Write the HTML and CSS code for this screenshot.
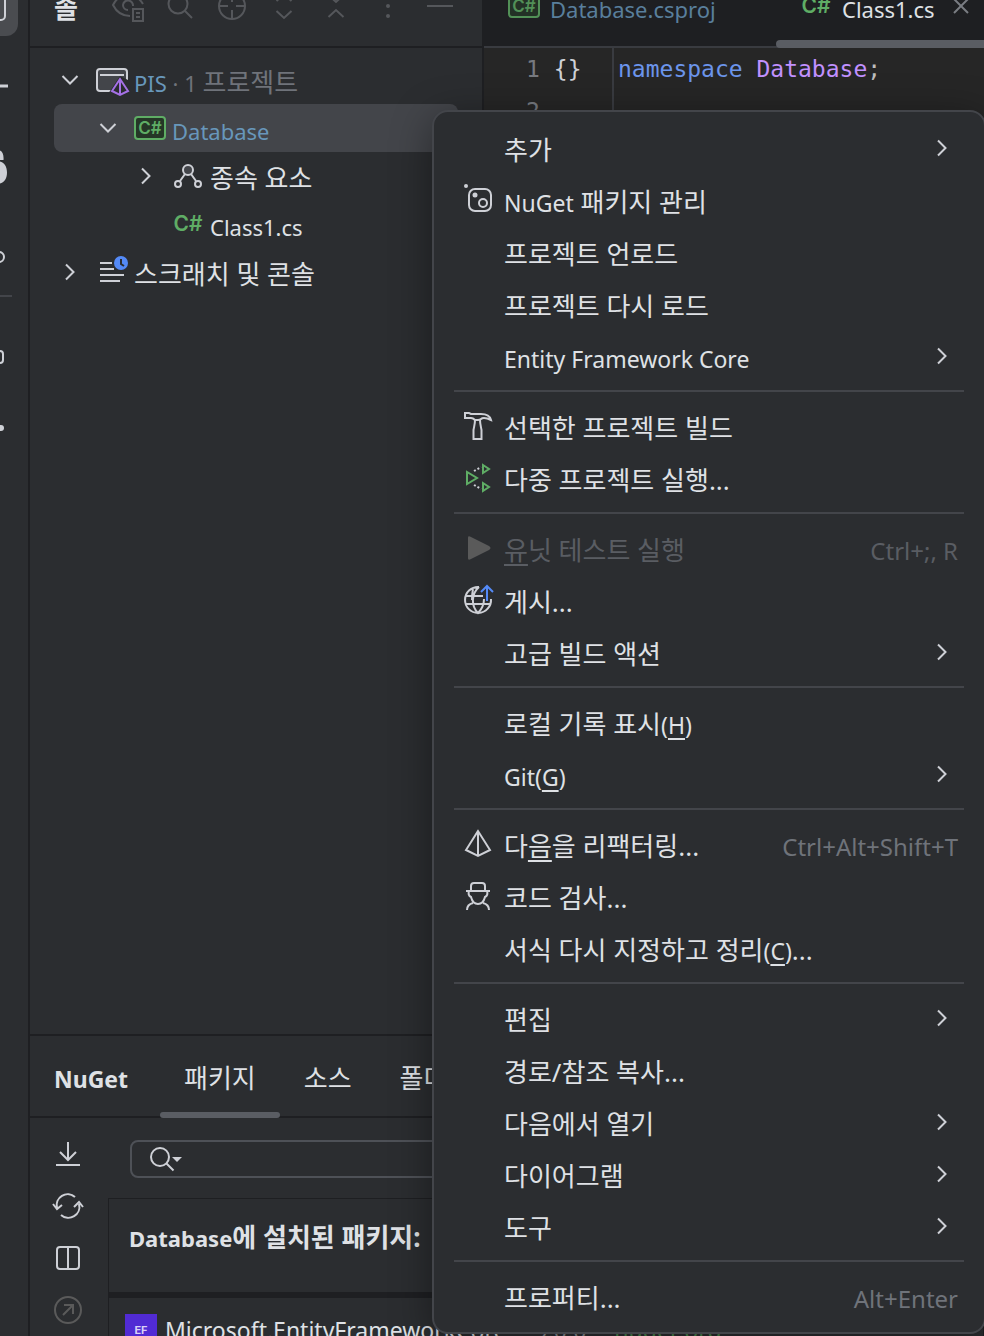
FILE: index.html
```html
<!DOCTYPE html>
<html lang="ko">
<head>
    <meta charset="UTF-8">
    <meta name="viewport" content="width=device-width, initial-scale=1.0">
    <title>PIS - Class1.cs</title>
    <link rel="stylesheet" href="styles.css">
</head>
<body>
    <!-- Shared icons -->
    <svg class="sprite" aria-hidden="true">
        <symbol id="chev-right" viewBox="0 0 32 32"><path d="M12 8.500l7.500 7.500-7.500 7.500"/></symbol>
        <symbol id="chev-down" viewBox="0 0 32 32"><path d="M8.500 12l7.500 7.500 7.500-7.500"/></symbol>
        <symbol id="csproj" viewBox="0 0 32 32">
            <rect x="1" y="5" width="30" height="22" rx="3" fill="#253627" stroke="#5fad65"/>
            <text class="cs-text" x="16" y="22" font-size="17">C#</text>
        </symbol>
        <symbol id="csfile" viewBox="0 0 32 32"><text class="cs-text" x="16" y="23" font-size="21">C#</text></symbol>
    </svg>

    <div class="app">
        <nav class="rail">
            <button class="rail-btn active" aria-label="Solution"><svg class="icon" viewBox="0 0 40 40"><rect x="5" y="7" width="32" height="27" rx="4"/></svg></button>
            <button class="rail-btn" aria-label="Commit"><svg class="icon" viewBox="0 0 40 40"><path d="M0 20h40" stroke-width="3"/></svg></button>
            <button class="rail-btn" aria-label="Services"><svg class="icon" viewBox="0 0 40 40"><path fill="#ced0d6" stroke="none" d="M20 4h10c4 0 6 4 5.500 10H28zM18 15h10c6 0 11 3 11 11.500S34 38 28 38H18z"/></svg></button>
            <button class="rail-btn" aria-label="Pull Requests"><svg class="icon" viewBox="0 0 40 40"><circle cx="31" cy="31" r="5"/></svg></button>
            <hr>
            <button class="rail-btn" aria-label="Plugins"><svg class="icon" viewBox="0 0 40 40"><rect x="21" y="14" width="14" height="12" rx="3"/></svg></button>
            <button class="rail-btn" aria-label="More"><svg class="icon" viewBox="0 0 40 40"><circle cx="33" cy="11" r="3" fill="#ced0d6" stroke="none"/></svg></button>
        </nav>

        <main class="main">
            <div class="workspace">
                <section class="explorer">
                    <header class="explorer-header">
                        <h2 class="ko">솔</h2>
                        <div class="actions">
                            <button aria-label="Preview"><svg class="icon" viewBox="0 0 32 32"><path d="M18 26C9 26 4 21 1 15 4 9 9 5 16 5s12 4 15 9M11 15a5 5 0 1 1 10 1M16 20a5 5 0 0 1-5-5"/><rect x="21" y="19" width="10" height="12"/><path d="M24 23h4M24 27h4"/></svg></button>
                            <button aria-label="Find"><svg class="icon" viewBox="0 0 32 32"><circle cx="14" cy="14" r="9.500"/><path d="M21 21l7 7"/></svg></button>
                            <button aria-label="Locate"><svg class="icon" viewBox="0 0 32 32"><circle cx="16" cy="16" r="13"/><path d="M16 3v9M16 20v9M3 16h9M20 16h9"/></svg></button>
                            <button aria-label="Expand all"><svg class="icon" viewBox="0 0 32 32"><path d="M8.500 11l7.500-7 7.500 7M8.500 21l7.500 7 7.500-7"/></svg></button>
                            <button aria-label="Collapse all"><svg class="icon" viewBox="0 0 32 32"><path d="M8.500 5l7.500 7 7.500-7M8.500 27l7.500-7 7.500 7"/></svg></button>
                            <button aria-label="Options"><svg class="icon" viewBox="0 0 32 32"><g fill="#55575b" stroke="none"><circle cx="16" cy="16" r="2"/><circle cx="16" cy="26" r="2"/></g></svg></button>
                            <button aria-label="Hide"><svg class="icon" viewBox="0 0 32 32"><path d="M3 16h26"/></svg></button>
                        </div>
                    </header>
                    <ul class="tree">
                        <li class="tree-row">
                            <svg class="icon"><use href="#chev-down"/></svg>
                            <svg class="icon node" viewBox="0 0 32 32"><rect x="1" y="5" width="30" height="22" rx="3" fill="#43454a"/><path d="M4 11h24"/><path d="M24 12l-12 18h20V16z" fill="#2b2d30" stroke="none"/><g stroke="#a571e6"><path d="M24 15l-8 12 8 4 8-4z"/><path d="M24 15v16"/></g></svg>
                            <span class="link">PIS</span><span class="muted">&nbsp;· 1&nbsp;</span><span class="muted ko">프로젝트</span>
                        </li>
                        <li class="tree-row level-1 selected">
                            <svg class="icon"><use href="#chev-down"/></svg>
                            <svg class="icon node"><use href="#csproj"/></svg>
                            <span class="link">Database</span>
                        </li>
                        <li class="tree-row level-2">
                            <svg class="icon"><use href="#chev-right"/></svg>
                            <svg class="icon node" viewBox="0 0 32 32"><circle cx="16" cy="10" r="5" fill="#43454a"/><circle cx="6" cy="24" r="3"/><circle cx="26" cy="24" r="3"/><path d="M13 14l-5 7M19 14l5 7"/></svg>
                            <span class="ko">종속 요소</span>
                        </li>
                        <li class="tree-row level-2">
                            <span class="icon"></span>
                            <svg class="icon node"><use href="#csfile"/></svg>
                            <span>Class1.cs</span>
                        </li>
                        <li class="tree-row">
                            <svg class="icon"><use href="#chev-right"/></svg>
                            <svg class="icon node" viewBox="0 0 32 32"><path d="M4 7h12M4 13h14M4 19h24M4 25h20"/><circle cx="25" cy="7" r="7" fill="#548af7" stroke="none"/><path d="M25 3v5l3 2" stroke="#2b2d30"/></svg>
                            <span class="ko">스크래치 및 콘솔</span>
                        </li>
                    </ul>
                </section>

                <section class="editor">
                    <div class="tabs">
                        <div class="tab dim">
                            <svg class="icon"><use href="#csproj"/></svg>
                            <a href="#csproj-file" class="link">Database.csproj</a>
                        </div>
                        <div class="tab active">
                            <svg class="icon"><use href="#csfile"/></svg>
                            <a href="#class1">Class1.cs</a>
                            <button aria-label="Close"><svg class="icon" viewBox="0 0 32 32"><path d="M9 9l14 14M23 9l-14 14" stroke="#7a7d83"/></svg></button>
                        </div>
                    </div>
                    <div class="code">
                        <div class="gutter">
                            <div class="line"><span>1</span><b>{}</b></div>
                            <div class="line"><span>2</span></div>
                        </div>
                        <pre><span class="keyword">namespace</span> <span class="name">Database</span>;</pre>
                    </div>
                </section>
            </div>

            <section class="nuget">
                <header class="nuget-header">
                    <h2>NuGet</h2>
                    <button class="nuget-tab ko active">패키지</button>
                    <button class="nuget-tab ko">소스</button>
                    <button class="nuget-tab ko">폴더</button>
                </header>
                <div class="nuget-body">
                    <div class="nuget-tools">
                        <button aria-label="Restore"><svg class="icon" viewBox="0 0 32 32"><path d="M16 4v18M8 14l8 8 8-8M4 27h24"/></svg></button>
                        <button aria-label="Refresh"><svg class="icon" viewBox="0 0 32 32"><path d="M23 7A11 11 0 0 0 5 18M1 14l4 5 5-4M9 25a11 11 0 0 0 18-11M22 17l5-5 4 5"/></svg></button>
                        <button aria-label="Layout"><svg class="icon" viewBox="0 0 32 32"><rect x="5" y="5" width="22" height="22" rx="3"/><path d="M16 5v22"/></svg></button>
                        <button aria-label="Open" disabled><svg class="icon" viewBox="0 0 32 32"><circle cx="16" cy="16" r="13"/><path d="M11 21l10-10M12 11h9v9"/></svg></button>
                    </div>
                    <div class="nuget-content">
                        <label class="search">
                            <svg class="icon" viewBox="0 0 32 32"><circle cx="12" cy="14" r="9"/><path d="M18.500 20.500l7 7"/><path d="M24 14h10l-5 5z" fill="#ced0d6" stroke="none"/></svg>
                            <input type="text" aria-label="Search packages">
                        </label>
                        <div class="packages">
                            <h3>Database<span class="ko">에 설치된 패키지:</span></h3>
                            <div class="package">
                                <svg viewBox="0 0 32 32"><rect width="32" height="32" fill="#512bd4"/><text x="16" y="20" class="ef-text">EF</text></svg>
                                <span>Microsoft.EntityFrameworkCore</span>
                                <span class="version">9.0.0</span>
                                <a href="#nuget-org">nuget.org</a>
                            </div>
                        </div>
                    </div>
                </div>
            </section>
        </main>
    </div>

    <div class="menu" role="menu">
        <button role="menuitem"><span class="icon"></span><span class="label ko">추가</span><svg class="icon"><use href="#chev-right"/></svg></button>
        <button role="menuitem"><svg class="icon" viewBox="0 0 32 32"><circle cx="4" cy="2" r="2" fill="#ced0d6" stroke="none"/><rect x="7" y="5" width="22" height="22" rx="6"/><circle cx="13" cy="11" r="2.500" fill="#ced0d6" stroke="none"/><circle cx="21" cy="19" r="4"/></svg><span class="label ko"><span class="en">NuGet</span> 패키지 관리</span></button>
        <button role="menuitem"><span class="icon"></span><span class="label ko">프로젝트 언로드</span></button>
        <button role="menuitem"><span class="icon"></span><span class="label ko">프로젝트 다시 로드</span></button>
        <button role="menuitem"><span class="icon"></span><span class="label">Entity Framework Core</span><svg class="icon"><use href="#chev-right"/></svg></button>
        <hr>
        <button role="menuitem"><svg class="icon" viewBox="0 0 32 32"><path d="M3 3h4l2 1h10c5 0 9 2 10 6-2-1-4-2-7-2-1 0-2 0-3 1-1 1-2 1-3 1h-3c-1-1-2-2-4-2H3z"/><path d="M13 10c0 4-1 7-1.500 10v9h8v-9c-.5-3-1.500-6-1.500-10"/></svg><span class="label ko">선택한 프로젝트 빌드</span></button>
        <button role="menuitem"><svg class="icon" viewBox="0 0 32 32"><g stroke="#5fad65"><path d="M5 10v12l10-6zM21 3v8l6-4zM21 21v8l6-4z"/></g><path d="M12 9l7-4M12 23l7 4" stroke-dasharray="2 2"/></svg><span class="label ko">다중 프로젝트 실행...</span></button>
        <hr>
        <button role="menuitem" disabled><svg class="icon" viewBox="0 0 32 32"><path d="M6 6v20c0 2 1 2 3 1l18-9c2-1 2-3 0-4L9 5C7 4 6 4 6 6z" fill="#5a5a5a" stroke="none"/></svg><span class="label ko"><u>유</u>닛 테스트 실행</span><kbd>Ctrl+;, R</kbd></button>
        <button role="menuitem"><svg class="icon" viewBox="0 0 32 32"><path d="M17 3a13 13 0 1 0 12 12M17 3c-8 7-8 19-1 26 4-4 6-9 6-14M11 5c0 0-1 5-1 11M4 12h17M4 20h24"/><path d="M25 17V3M19 8l6-6 6 6" stroke="#548af7"/></svg><span class="label ko">게시...</span></button>
        <button role="menuitem"><span class="icon"></span><span class="label ko">고급 빌드 액션</span><svg class="icon"><use href="#chev-right"/></svg></button>
        <hr>
        <button role="menuitem"><span class="icon"></span><span class="label ko">로컬 기록 표시<span class="en">(<u>H</u>)</span></span></button>
        <button role="menuitem"><span class="icon"></span><span class="label">Git(<u>G</u>)</span><svg class="icon"><use href="#chev-right"/></svg></button>
        <hr>
        <button role="menuitem"><svg class="icon" viewBox="0 0 32 32"><path d="M16 3L4 22l12 6 12-6zM16 3v25"/></svg><span class="label ko">다<u>음</u>을 리팩터링...</span><kbd>Ctrl+Alt+Shift+T</kbd></button>
        <button role="menuitem"><svg class="icon" viewBox="0 0 32 32"><path d="M4 11h24M9 11V6c0-2 1-3 3-3h8c2 0 3 1 3 3v5M7 11c-1 3 0 5 2 6 1 4 3 7 7 7s6-3 7-7c2-1 3-3 2-6M5 30c0-4 2-6 6-7M27 30c0-4-2-6-6-7"/></svg><span class="label ko">코드 검사...</span></button>
        <button role="menuitem"><span class="icon"></span><span class="label ko">서식 다시 지정하고 정리<span class="en">(<u>C</u>)</span>...</span></button>
        <hr>
        <button role="menuitem"><span class="icon"></span><span class="label ko">편집</span><svg class="icon"><use href="#chev-right"/></svg></button>
        <button role="menuitem"><span class="icon"></span><span class="label ko">경로/참조 복사...</span></button>
        <button role="menuitem"><span class="icon"></span><span class="label ko">다음에서 열기</span><svg class="icon"><use href="#chev-right"/></svg></button>
        <button role="menuitem"><span class="icon"></span><span class="label ko">다이어그램</span><svg class="icon"><use href="#chev-right"/></svg></button>
        <button role="menuitem"><span class="icon"></span><span class="label ko">도구</span><svg class="icon"><use href="#chev-right"/></svg></button>
        <hr>
        <button role="menuitem"><span class="icon"></span><span class="label ko">프로퍼티...</span><kbd>Alt+Enter</kbd></button>
    </div>
</body>
</html>
```
FILE: styles.css
```css
* { box-sizing: border-box; }
body {
    margin: 0;
    height: 100vh;
    overflow: hidden;
    position: relative;
    background: #2b2d30;
    color: #dfe1e5;
    font: 22px/32px "Noto Sans", "Noto Sans CJK KR", sans-serif;
}
button, input, kbd { font: inherit; color: inherit; }
button { background: none; border: 0; padding: 0; }
a { color: inherit; text-decoration: none; }
h2, h3, ul, pre { margin: 0; padding: 0; }
h2, h3 { font-size: 22px; }
.sprite { display: none; }
.icon {
    display: block;
    flex: none;
    width: 32px;
    height: 32px;
    fill: none;
    stroke: #ced0d6;
    stroke-width: 2;
    overflow: visible;
}
.cs-text {
    font-family: Inter, sans-serif;
    font-weight: 600;
    fill: #5fad65;
    stroke: none;
    text-anchor: middle;
}
.ef-text {
    font: bold 11px Inter, sans-serif;
    fill: #d9d0f7;
    text-anchor: middle;
}
.link { color: #6897bb; }
.muted { color: #6f737a; }
/* Hangul is set larger than the latin text around it */
.ko { font-size: 26px; }
.en { font-size: 23px; }

.app { display: flex; height: calc(100vh + 34px); margin: -34px 0 0 -52px; }
.rail {
    flex: none;
    width: 82px;
    padding: 10px 20px 0 10px;
    border-right: 2px solid #1e1f22;
    display: flex;
    flex-direction: column;
    gap: 20px;
}
.rail-btn { flex: none; width: 60px; height: 60px; border-radius: 12px; display: grid; place-items: center; }
.rail-btn .icon { width: 40px; height: 40px; }
.rail-btn.active { background: #4a4c50; }
.rail hr { flex: none; width: 54px; margin: -1px 0 10px; border: 0; border-top: 2px solid #43454a; }

.main { flex: 1; min-width: 0; display: flex; flex-direction: column; }
.workspace { flex: 1; display: flex; min-height: 0; }

/* Solution explorer */
.explorer { flex: none; width: 454px; border-right: 2px solid #1e1f22; }
.explorer-header {
    height: 82px;
    padding: 0 26px 0 24px;
    border-bottom: 2px solid #1e1f22;
    display: flex;
    align-items: center;
}
.explorer-header h2 { padding-top: 4px; }
.actions { display: flex; gap: 20px; margin-left: auto; }
.actions .icon { stroke: #55575b; }
.tree { list-style: none; padding: 8px 24px; }
.tree-row { display: flex; align-items: center; height: 48px; border-radius: 8px; white-space: nowrap; }
.tree-row.level-1 { padding-left: 38px; }
.tree-row.level-2 { padding-left: 76px; }
.tree-row.selected { background: #43454a; }
.tree-row > span { padding-top: 6px; }
.tree-row > .ko { padding-top: 4px; }
.tree-row .node { margin: 0 6px 0 10px; }

/* Editor */
.editor { flex: 1; min-width: 0; background: #262626; display: flex; flex-direction: column; }
.tabs { height: 82px; background: #1e1f22; border-bottom: 2px solid #393b40; display: flex; }
.tab { flex: none; width: 292px; padding: 0 24px; display: flex; align-items: center; gap: 10px; position: relative; }
.tab a { padding-top: 6px; }
.tab.active { flex: 1; min-width: 0; }
.tab.active::after {
    content: "";
    position: absolute;
    left: 0;
    right: 0;
    bottom: -2px;
    height: 8px;
    border-radius: 4px 0 0 4px;
    background: #5a5d63;
}
.tab.dim .icon, .tab.dim .link { opacity: 0.8; }
.code { flex: 1; display: flex; font: 23px/42px "DejaVu Sans Mono", monospace; }
.gutter { width: 130px; border-right: 2px solid #393b40; color: #777a80; }
.line { display: flex; gap: 14px; padding-left: 42px; }
.line b { font-weight: normal; color: #ced0d6; }
.code pre { padding-left: 4px; font: inherit; color: #bdbdbd; }
.keyword { color: #6c95eb; }
.name { color: #c191ff; }

/* NuGet tool window */
.nuget { flex: none; height: 302px; border-top: 2px solid #1e1f22; overflow: hidden; }
.nuget-header { display: flex; height: 82px; border-bottom: 2px solid #1e1f22; padding-left: 24px; }
.nuget-header h2 { width: 106px; font-size: 23px; line-height: 86px; }
.nuget-tab { position: relative; padding: 4px 24px 0; }
.nuget-tab.active::after {
    content: "";
    position: absolute;
    left: 0;
    right: 0;
    bottom: -2px;
    height: 6px;
    border-radius: 3px;
    background: #5a5d63;
}
.nuget-body { display: flex; }
.nuget-tools { flex: none; width: 78px; padding: 20px 22px 0; display: flex; flex-direction: column; gap: 20px; }
.nuget-tools button:disabled .icon { stroke: #5a5a5a; }
.nuget-content { flex: 1; min-width: 0; }
.search {
    display: flex;
    align-items: center;
    height: 38px;
    margin: 22px 22px 20px;
    padding-left: 16px;
    border: 2px solid #4e5157;
    border-radius: 8px;
}
.search input { flex: 1; min-width: 0; margin-left: 12px; border: 0; background: none; outline: 0; }
.packages { border: 1px solid #1e1f22; }
.packages h3 { height: 99px; padding: 22px 20px 0; border-bottom: 6px solid #1e1f22; }
.package { display: flex; align-items: center; gap: 8px; padding: 16px 16px 0; font-size: 23px; white-space: nowrap; }
.package svg { width: 32px; height: 32px; }
.version { margin-left: 20px; color: #8c8f94; }
.package a { margin-left: 20px; color: #4c8a4f; }

/* Context menu */
.menu {
    position: absolute;
    top: 110px;
    left: 432px;
    right: -2px;
    padding: 10px 0;
    background: #2b2d30;
    border: 2px solid #43454a;
    border-radius: 16px;
    box-shadow: 0 8px 40px rgba(0, 0, 0, 0.4);
}
.menu button {
    display: flex;
    align-items: center;
    width: 100%;
    height: 52px;
    padding: 0 26px 0 28px;
    font-size: 23px;
    text-align: left;
}
.menu .label { flex: 1; margin-left: 10px; padding-top: 6px; white-space: nowrap; }
.menu .label.ko { padding-top: 4px; }
.menu hr { margin: 8px 20px; border: 0; border-top: 2px solid #43454a; }
.menu kbd { padding-top: 6px; font-size: 24px; color: #6f737a; }
.menu button:disabled { color: #5a5d63; }
.menu button:disabled kbd { color: #5a5d63; }
.menu u { text-underline-offset: 4px; text-decoration-thickness: 2px; }
```
